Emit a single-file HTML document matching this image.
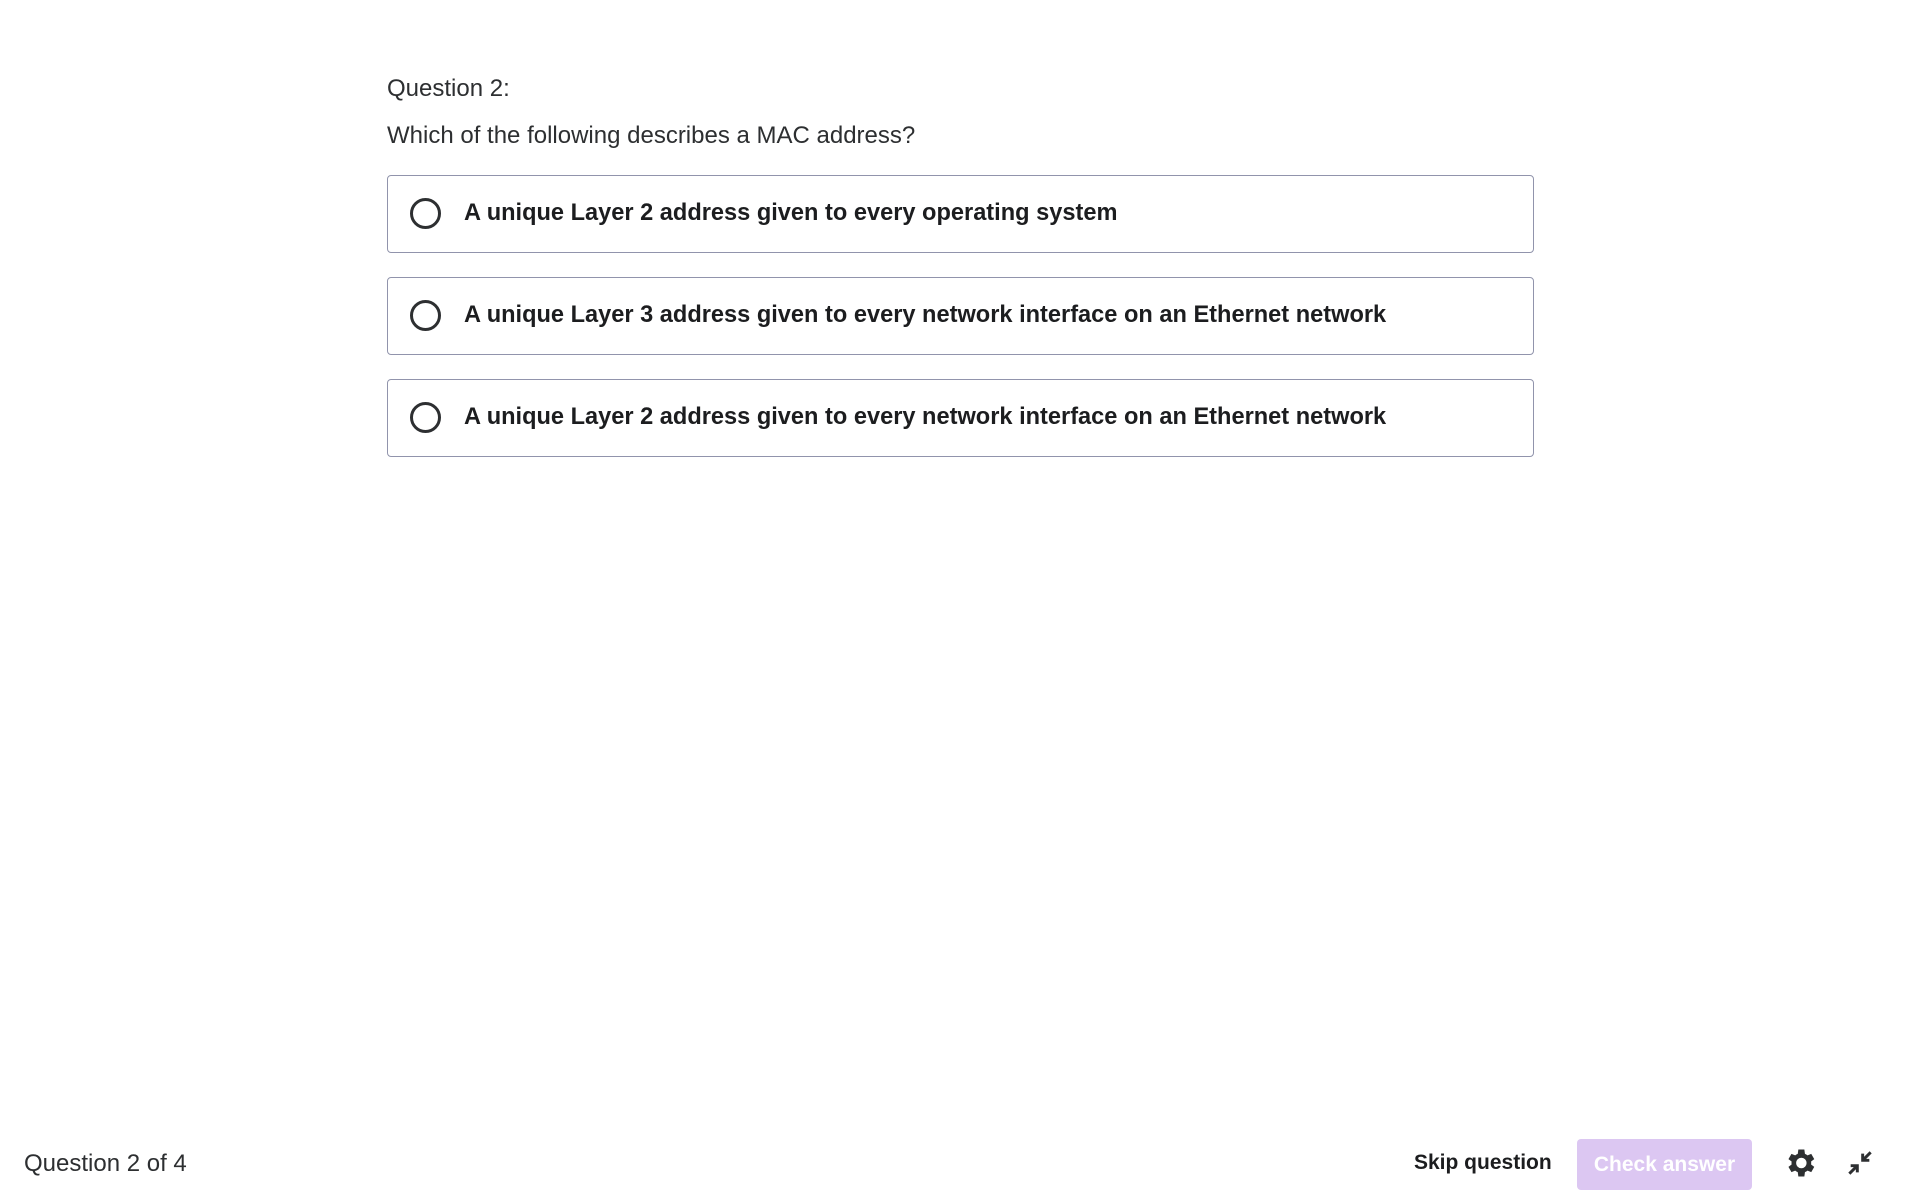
<!DOCTYPE html>
<html><head><meta charset="utf-8"><style>
body{margin:0;width:1920px;height:1200px;background:#fff;font-family:"Liberation Sans",sans-serif;color:#2d2f31;position:relative;overflow:hidden}
.q{position:absolute;left:387px;font-size:24px}
.opt{position:absolute;left:387px;width:1147px;height:78px;border:1px solid #9194ac;border-radius:4px;box-sizing:border-box}
.opt .c{position:absolute;left:22px;top:22px;border:3px solid #2d2f31;border-radius:50%;box-sizing:border-box;width:31px;height:31px}
.opt span{position:absolute;left:76px;top:24px;font-size:23.6px;font-weight:bold;white-space:nowrap;color:#1c1d1f}
.b{position:absolute;top:1151px;font-size:21px;font-weight:bold;white-space:nowrap;color:#1c1d1f}
</style></head><body>
<div class="q" style="top:75px">Question 2:</div>
<div class="q" style="top:122px">Which of the following describes a MAC address?</div>
<div class="opt" style="top:175px"><div class="c"></div><span>A unique Layer 2 address given to every operating system</span></div>
<div class="opt" style="top:277px"><div class="c"></div><span>A unique Layer 3 address given to every network interface on an Ethernet network</span></div>
<div class="opt" style="top:379px"><div class="c"></div><span>A unique Layer 2 address given to every network interface on an Ethernet network</span></div>
<div style="position:absolute;left:24px;top:1150px;font-size:24px">Question 2 of 4</div>
<div class="b" style="left:1414px">Skip question</div>
<div style="position:absolute;left:1577px;top:1139px;width:175px;height:51px;background:#dcc7f2;border-radius:4px;color:#fff;font-weight:bold;font-size:21px;text-align:center;line-height:51px">Check answer</div>
<svg style="position:absolute;left:1782px;top:1145px" width="36" height="36" viewBox="0 0 24 24"><path fill="#2d2f31" d="M19.4 13a7.5 7.5 0 000-2l2.1-1.6-2-3.5-2.5 1a7.6 7.6 0 00-1.7-1L14.9 3h-4l-.4 2.9a7.6 7.6 0 00-1.7 1l-2.5-1-2 3.5L6.4 11a7.5 7.5 0 000 2l-2.1 1.6 2 3.5 2.5-1a7.6 7.6 0 001.7 1l.4 2.9h4l.4-2.9a7.6 7.6 0 001.7-1l2.5 1 2-3.5zM12.9 15.5a3.5 3.5 0 110-7 3.5 3.5 0 010 7z"/></svg>
<svg style="position:absolute;left:1844px;top:1147px" width="32" height="32" viewBox="0 0 24 24" fill="none" stroke="#2d2f31" stroke-width="2.2"><path d="M4 20l6-6M5 14h5v5M20 4l-6 6M14 5v5h5"/></svg>
</body></html>
